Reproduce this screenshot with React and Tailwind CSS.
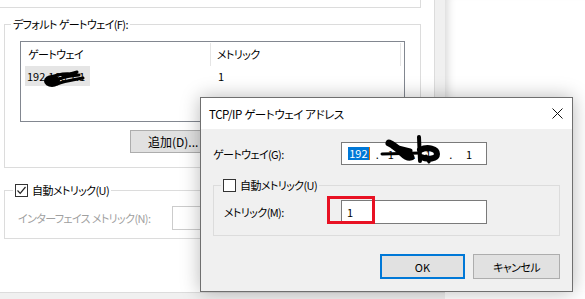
import React from 'react'

function CheckBox({ checked }) {
  return (
    <span className="flex h-[13px] w-[13px] shrink-0 items-center justify-center border border-[#333333] bg-white">
      {checked && (
        <svg width="11" height="11" viewBox="0 0 11 11" fill="none">
          <path d="M1.5 5.5 L4.2 8.3 L9.5 2" stroke="#222" strokeWidth="1.2" />
        </svg>
      )}
    </span>
  )
}

export default function App() {
  return (
    <div className="relative h-[299px] w-[585px] overflow-hidden bg-white font-['Noto_Sans_CJK_JP',sans-serif] text-[11px] leading-[16px] tracking-[-0.6px] text-black [font-feature-settings:'palt']">
      {/* background window */}
      <div className="flex h-[292px]">
        <div className="w-[434px]">
          <div className="h-[8px] w-[421px] border-r border-b border-[#dcdcdc]" />

          <fieldset className="mt-[8px] ml-[4px] h-[152px] w-[417px] border border-[#dcdcdc]">
            <legend className="ml-[6px] px-[2px] leading-[16px]">デフォルト ゲートウェイ(F):</legend>
            <div className="relative mt-[9px] ml-[15px] h-[81px] w-[385px] border border-[#828790] bg-white">
              <div className="flex h-[24px] items-center">
                <div className="flex h-[23px] w-[190px] items-center border-r border-[#e5e5e5] pl-[7px]">ゲートウェイ</div>
                <div className="flex h-[23px] w-[190px] items-center border-r border-[#e5e5e5] pl-[6px]">メトリック</div>
              </div>
              <div className="flex h-[20px] items-center tracking-normal">
                <div className="w-[190px]">
                  <span className="ml-[4px] flex h-[20px] w-[65px] items-center bg-[#e5e5e5] pl-[2px]">192.168.1.1</span>
                </div>
                <div className="pl-[7px]">1</div>
              </div>
              <svg className="absolute top-[26px] left-[22px]" width="46" height="22" viewBox="0 0 46 22" fill="none">
                <ellipse cx="9" cy="13" rx="8" ry="6" fill="#000" />
                <path d="M6 10 C14 6 22 5 30 6 M10 14 C18 9 26 8 36 7 M14 16 C22 13 30 12 40 10 M20 8 L34 4" stroke="#000" strokeWidth="3" strokeLinecap="round" />
              </svg>
            </div>
            <button className="mt-[8px] ml-[125px] h-[23px] w-[84px] border border-[#adadad] bg-[#e1e1e1] pl-[17px] text-left text-[12px] tracking-normal">
              追加(D)...
            </button>
          </fieldset>

          <fieldset className="mt-[14px] ml-[4px] h-[57px] w-[417px] border border-[#dcdcdc]">
            <legend className="ml-[8px] flex items-center gap-[4px] px-[2px] leading-[16px]">
              <CheckBox checked />
              <span>自動メトリック(U)</span>
            </legend>
            <div className="mt-[8px] ml-[13px] flex items-center">
              <span className="w-[154px] whitespace-nowrap text-[#a0a0a0]">インターフェイス メトリック(N):</span>
              <div className="h-[24px] w-[120px] border border-[#cccccc] bg-white" />
            </div>
          </fieldset>
        </div>
        <div className="w-[11px] border-l border-[#dcdcdc] bg-[#f0f0f0]" />
        <div className="flex-1 bg-white shadow-[inset_10px_0_10px_-8px_rgba(0,0,0,0.18)]" />
      </div>
      <div className="h-[7px] w-[445px] border-t border-[#dcdcdc] bg-[#f0f0f0]" />

      {/* dialog */}
      <div className="absolute top-[97px] left-[200px] flex h-[195px] w-[373px] flex-col border border-[#6f6f6f] bg-[#f0f0f0] shadow-[0_0_18px_rgba(0,0,0,0.28)]">
        <div className="flex h-[31px] shrink-0 items-center justify-between bg-white pr-[9px] pl-[8px]">
          <span className="text-[11.5px] tracking-[-0.4px]">TCP/IP ゲートウェイ アドレス</span>
          <svg width="11" height="11" viewBox="0 0 11 11" fill="none">
            <path d="M0.5 0.5 L10.5 10.5 M10.5 0.5 L0.5 10.5" stroke="#111" strokeWidth="1" />
          </svg>
        </div>
        <div className="flex flex-col pt-[13px] pr-[12px] pl-[12px]">
          <div className="flex items-center">
            <span className="w-[128px]">ゲートウェイ(G):</span>
            <div className="relative flex h-[23px] w-[146px] items-center border border-[#7a7a7a] bg-white tracking-normal">
              <span className="flex w-[34px] justify-center">
                <span className="bg-[#0078d7] px-[1px] leading-[13px] text-white">192</span>
                <span className="h-[13px] w-[1px] bg-[#e07000]" />
              </span>
              <span className="w-[3px]">.</span>
              <span className="w-[34px] pl-[9px] text-left">1</span>
              <span className="w-[3px]">.</span>
              <span className="w-[34px] pr-[8px] text-center">1</span>
              <span className="w-[3px]">.</span>
              <span className="w-[34px] text-center">1</span>
              <svg className="absolute top-[-8px] left-[38px]" width="62" height="30" viewBox="0 0 62 30" fill="none">
                <path d="M2 19 L40 18" stroke="#000" strokeWidth="3" strokeLinecap="round" />
                <path d="M9 8 C14 10 18 14 22 18 C25 21 28 23 31 22" stroke="#000" strokeWidth="7" strokeLinecap="round" />
                <path d="M14 12 L30 16" stroke="#000" strokeWidth="5" strokeLinecap="round" />
                <path d="M39 2 L40 26" stroke="#000" strokeWidth="4" strokeLinecap="round" />
                <path d="M40 15 C48 11 57 14 57 19 C57 24 48 25 41 22" stroke="#000" strokeWidth="6" strokeLinecap="round" />
                <path d="M46 21 L49 27" stroke="#000" strokeWidth="3" strokeLinecap="round" />
              </svg>
            </div>
          </div>

          <fieldset className="mt-[12px] h-[59px] w-[347px] border border-[#dcdcdc]">
            <legend className="ml-[7px] flex items-center gap-[4px] px-[2px] leading-[16px]">
              <CheckBox />
              <span>自動メトリック(U)</span>
            </legend>
            <div className="mt-[7px] ml-[10px] flex items-center">
              <span className="w-[117px]">メトリック(M):</span>
              <div className="flex h-[24px] w-[146px] items-center border border-[#7a7a7a] bg-white pl-[5px] tracking-normal">1</div>
            </div>
          </fieldset>

          <div className="mt-[18px] flex justify-end gap-[8px]">
            <button className="h-[25px] w-[85px] border-2 border-[#0078d7] bg-[#e1e1e1] tracking-normal">OK</button>
            <button className="h-[25px] w-[87px] border border-[#adadad] bg-[#e1e1e1]">キャンセル</button>
          </div>
        </div>
        <div className="absolute top-[98px] left-[126px] h-[28px] w-[48px] border-[3px] border-[#e81123]" />
      </div>
    </div>
  )
}
